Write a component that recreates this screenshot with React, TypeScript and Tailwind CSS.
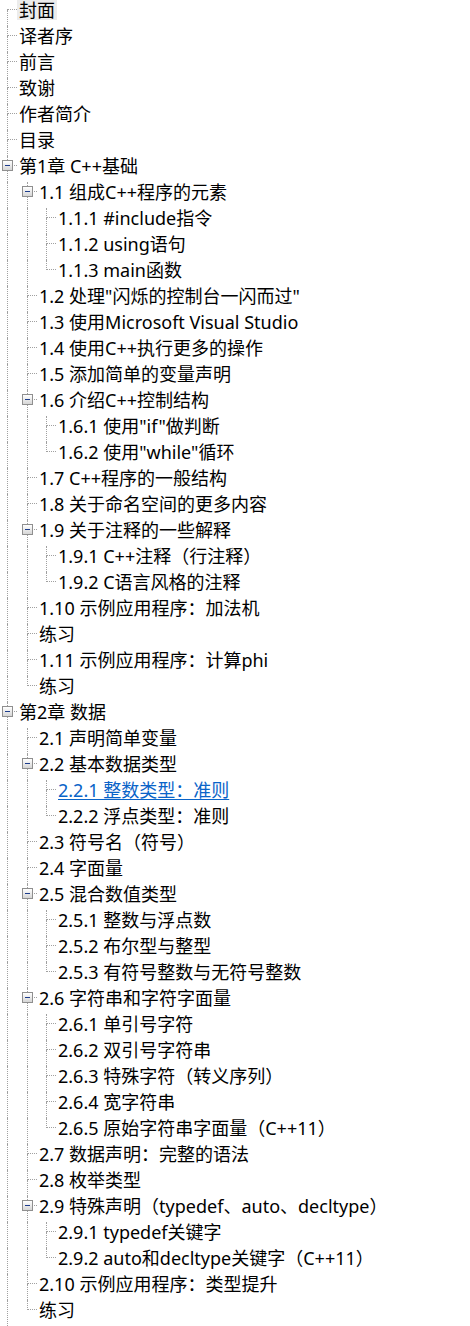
import React from "react";

type Node = { t: string; c?: Node[]; link?: boolean; sel?: boolean };

const TREE: Node[] = [
  { t: "封面", sel: true },
  { t: "译者序" },
  { t: "前言" },
  { t: "致谢" },
  { t: "作者简介" },
  { t: "目录" },
  {
    t: "第1章 C++基础",
    c: [
      {
        t: "1.1 组成C++程序的元素",
        c: [{ t: "1.1.1 #include指令" }, { t: "1.1.2 using语句" }, { t: "1.1.3 main函数" }],
      },
      { t: '1.2 处理"闪烁的控制台一闪而过"' },
      { t: "1.3 使用Microsoft Visual Studio" },
      { t: "1.4 使用C++执行更多的操作" },
      { t: "1.5 添加简单的变量声明" },
      {
        t: "1.6 介绍C++控制结构",
        c: [{ t: '1.6.1 使用"if"做判断' }, { t: '1.6.2 使用"while"循环' }],
      },
      { t: "1.7 C++程序的一般结构" },
      { t: "1.8 关于命名空间的更多内容" },
      {
        t: "1.9 关于注释的一些解释",
        c: [{ t: "1.9.1 C++注释（行注释）" }, { t: "1.9.2 C语言风格的注释" }],
      },
      { t: "1.10 示例应用程序：加法机" },
      { t: "练习" },
      { t: "1.11 示例应用程序：计算phi" },
      { t: "练习" },
    ],
  },
  {
    t: "第2章 数据",
    c: [
      { t: "2.1 声明简单变量" },
      {
        t: "2.2 基本数据类型",
        c: [{ t: "2.2.1 整数类型：准则", link: true }, { t: "2.2.2 浮点类型：准则" }],
      },
      { t: "2.3 符号名（符号）" },
      { t: "2.4 字面量" },
      {
        t: "2.5 混合数值类型",
        c: [
          { t: "2.5.1 整数与浮点数" },
          { t: "2.5.2 布尔型与整型" },
          { t: "2.5.3 有符号整数与无符号整数" },
        ],
      },
      {
        t: "2.6 字符串和字符字面量",
        c: [
          { t: "2.6.1 单引号字符" },
          { t: "2.6.2 双引号字符串" },
          { t: "2.6.3 特殊字符（转义序列）" },
          { t: "2.6.4 宽字符串" },
          { t: "2.6.5 原始字符串字面量（C++11）" },
        ],
      },
      { t: "2.7 数据声明：完整的语法" },
      { t: "2.8 枚举类型" },
      {
        t: "2.9 特殊声明（typedef、auto、decltype）",
        c: [{ t: "2.9.1 typedef关键字" }, { t: "2.9.2 auto和decltype关键字（C++11）" }],
      },
      { t: "2.10 示例应用程序：类型提升" },
      { t: "练习" },
    ],
  },
];

type Row = {
  node: Node;
  level: number;
  guides: boolean[]; // continuation per ancestor column
  hasNext: boolean;
  first: boolean;
};

function flatten(nodes: Node[], level: number, guides: boolean[], out: Row[], moreAfter: boolean) {
  nodes.forEach((n, i) => {
    const hasNext = i < nodes.length - 1 || moreAfter;
    out.push({ node: n, level, guides, hasNext, first: level === 0 && i === 0 });
    if (n.c) flatten(n.c, level + 1, [...guides, hasNext], out, false);
  });
  return out;
}

// root list continues below the visible area (more chapters)
const ROWS = flatten(TREE, 0, [], [], true);

const GUIDE_W = ["w-[20px]", "w-[19px]", "w-[20px]"];
const dot = "border-dotted border-[#a0a0a0]";

function TreeRow({ r }: { r: Row }) {
  return (
    <div className="flex h-[26px] items-stretch">
      {r.guides.map((g, i) => (
        <div key={i} className={`${GUIDE_W[i]} shrink-0`}>
          {g && <div className={`ml-[7px] h-full border-l ${dot}`} />}
        </div>
      ))}
      {/* elbow */}
      <div className="relative w-[17px] shrink-0">
        <div
          className={`ml-[7px] h-[10px] w-[10px] border-b ${dot} ${r.first ? "" : `border-l`}`}
        />
        {r.hasNext && <div className={`ml-[7px] h-[16px] border-l ${dot}`} />}
        {r.node.c && (
          <div className="absolute left-[2px] top-[4px] flex h-[11px] w-[11px] items-center justify-center border border-[#8f8f8f] bg-gradient-to-b from-white to-[#d6d6d6]">
            <div className="h-px w-[5px] bg-[#1c3c8c]" />
          </div>
        )}
      </div>
      <div className="flex items-start">
        <span
          className={`whitespace-nowrap px-[2px] leading-[20px] ${
            r.node.sel ? "bg-[#ececec]" : ""
          } ${r.node.link ? "text-[#0a64c8] underline decoration-1 underline-offset-2" : "text-black"}`}
        >
          {r.node.t}
        </span>
      </div>
    </div>
  );
}

export default function App() {
  return (
    <div
      className="h-[1326px] w-[470px] overflow-hidden bg-white text-[18px]"
      style={{ fontFamily: '"Noto Sans", "Noto Sans CJK SC", sans-serif' }}
    >
      {ROWS.map((r, i) => (
        <TreeRow key={i} r={r} />
      ))}
    </div>
  );
}
